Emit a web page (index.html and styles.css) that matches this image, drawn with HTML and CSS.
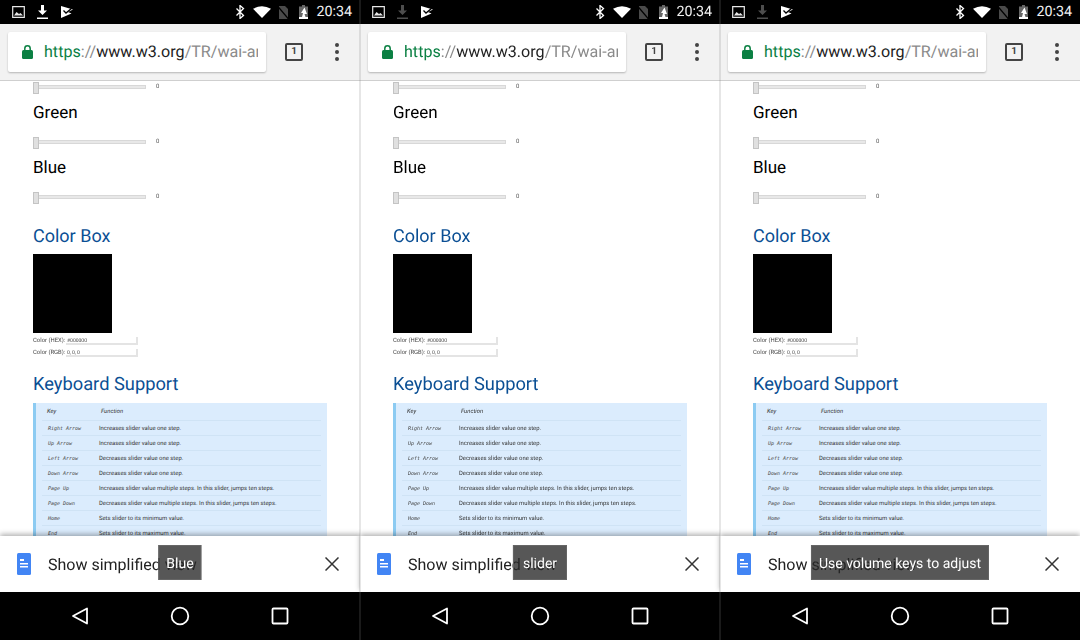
FILE: index.html
```html
<!DOCTYPE html>
<html lang="en">
<head>
    <meta charset="UTF-8">
    <title>Slider screenshots</title>
    <link rel="stylesheet" href="styles.css">
</head>
<body>
    <div class="telefonos">
        <template id="plantilla">
            <section class="telefono">
                <div class="estado">
                    <svg class="ico-foto" width="13" height="12" viewBox="0 0 13 12"><path d="M.7.7h11.600v10.600H.7z" fill="none" stroke="#e8e8e8" stroke-width="1.200"/><path d="M2 9.500l2.500-3.500 2.500 2 1.500-1 2.500 2.500z" fill="#e8e8e8"/></svg>
                    <svg class="ico-bajar" width="11" height="14" viewBox="0 0 11 14"><path d="M4 0h3v5.500h3L5.500 10 1 5.500h3zM0 12.500h11V14H0z" fill="#fff"/></svg>
                    <svg class="ico-play" width="12" height="12" viewBox="0 0 12 12"><path d="M0 0l12 3.500-5 2.500 3.500 1.500L0 12z" fill="#fff"/><path d="M2.500 4.500l2.500 2.500L11 2" fill="none" stroke="#000" stroke-width="1.300"/></svg>
                    <span class="hueco"></span>
                    <svg width="10" height="14" viewBox="0 0 10 14"><path d="M1.500 3.500l7 7L5 13.500V.5l3.500 3-7 7" fill="none" stroke="#fff" stroke-width="1.300"/></svg>
                    <svg class="ico-wifi" width="18" height="12" viewBox="0 0 18 12"><path d="M0 2.800Q9-2.300 18 2.800L9 12z" fill="#fff"/></svg>
                    <svg class="ico-sim" width="12" height="13" viewBox="0 0 12 13"><path d="M2 0h6l3 3v10H2z" fill="#4a4a4a"/><path d="M.5 0l11 13" stroke="#000" stroke-width="1.300"/></svg>
                    <svg class="ico-bat" width="9" height="14" viewBox="0 0 9 14"><path d="M3 0h3v1.500h3V12H0V1.500h3z" fill="#666"/><path d="M0 12h9v2H0z" fill="#fff"/><path d="M5.500 2.500L2 8h2l-1 4h3.500l-1-3H8z" fill="#fff"/></svg>
                    <span class="hora">20:34</span>
                </div>
                <div class="barra">
                    <div class="url">
                        <svg class="candado" width="11" height="14" viewBox="0 0 11 14"><path d="M2.800 5V3.500a2.700 2.700 0 0 1 5.400 0V5" fill="none" stroke="#0b8043" stroke-width="1.500"/><rect y="5" width="11" height="9" rx="1.500" fill="#0b8043"/></svg>
                        <span class="url-texto"><b class="verde">https</b><i class="gris">://</i>www.w3.org<i class="gris">/TR/wai-ar</i></span>
                    </div>
                    <div class="pestanas">1</div>
                    <div class="menu"><span></span><span></span><span></span></div>
                </div>
                <main class="pagina">
                    <div class="deslizador primero"><span class="pista"></span><span class="valor">0</span></div>
                    <h4>Green</h4>
                    <div class="deslizador"><span class="pista"></span><span class="valor">0</span></div>
                    <h4>Blue</h4>
                    <div class="deslizador"><span class="pista"></span><span class="valor">0</span></div>
                    <h3 class="titulo-caja">Color Box</h3>
                    <div class="caja"></div>
                    <div class="campo"><label>Color (HEX):</label><span class="entrada">#000000</span></div>
                    <div class="campo"><label>Color (RGB):</label><span class="entrada">0, 0, 0</span></div>
                    <h3 class="titulo-teclado">Keyboard Support</h3>
                    <table class="teclas">
                        <tr><th>Key</th><th>Function</th></tr>
                        <tr><td><kbd>Right Arrow</kbd></td><td>Increases slider value one step.</td></tr>
                        <tr><td><kbd>Up Arrow</kbd></td><td>Increases slider value one step.</td></tr>
                        <tr><td><kbd>Left Arrow</kbd></td><td>Decreases slider value one step.</td></tr>
                        <tr><td><kbd>Down Arrow</kbd></td><td>Decreases slider value one step.</td></tr>
                        <tr><td><kbd>Page Up</kbd></td><td>Increases slider value multiple steps. In this slider, jumps ten steps.</td></tr>
                        <tr><td><kbd>Page Down</kbd></td><td>Decreases slider value multiple steps. In this slider, jumps ten steps.</td></tr>
                        <tr><td><kbd>Home</kbd></td><td>Sets slider to its minimum value.</td></tr>
                        <tr><td><kbd>End</kbd></td><td>Sets slider to its maximum value.</td></tr>
                    </table>
                </main>
                <div class="aviso">
                    <svg width="14" height="22" viewBox="0 0 14 22"><rect width="14" height="22" rx="1.500" fill="#4285f4"/><path d="M3 6h4v2H3zM3 10h8v1.500H3zM3 13h8v1.500H3z" fill="#fff"/></svg>
                    <span class="aviso-texto">Show simplified view</span>
                    <svg class="cerrar" width="14" height="14" viewBox="0 0 14 14"><path d="M.5.5l13 13M13.500.5l-13 13" stroke="#333" stroke-width="1.500"/></svg>
                    <div class="globo"></div>
                </div>
                <nav class="navegacion">
                    <svg width="18" height="18" viewBox="0 0 18 18"><path d="M16 1.500v15L2 9z" fill="none" stroke="#fff" stroke-width="1.800" stroke-linejoin="round"/></svg>
                    <svg width="20" height="20" viewBox="0 0 20 20"><circle cx="10" cy="10" r="8.300" fill="none" stroke="#fff" stroke-width="1.800"/></svg>
                    <svg width="18" height="18" viewBox="0 0 18 18"><rect x="1.500" y="1.500" width="15" height="15" rx="1" fill="none" stroke="#fff" stroke-width="1.800"/></svg>
                </nav>
            </section>
        </template>
    </div>

    <script>
        const globos = ["Blue", "slider", "Use volume keys to adjust"];
        const contenedor = document.querySelector(".telefonos");
        const plantilla = document.getElementById("plantilla");

        globos.forEach(function (texto, i) {
            const copia = plantilla.content.cloneNode(true);
            copia.querySelector(".globo").innerText = texto;
            if (i > 0) copia.querySelector(".ico-bajar").classList.add("apagado");
            contenedor.appendChild(copia);
        });
    </script>
</body>
</html>
```

FILE: styles.css
```css
* {
    box-sizing: border-box;
}
body {
    margin: 0;
    font-family: Roboto, "Liberation Sans", sans-serif;
    background: #fff;
    text-rendering: geometricPrecision;
}
.telefonos {
    display: flex;
    width: 1080px;
    height: 640px;
    overflow: hidden;
    filter: blur(0.35px);
}
.telefono {
    position: relative;
    width: 360px;
    height: 640px;
    flex: none;
    display: flex;
    flex-direction: column;
}
/* linea entre capturas */
.telefono + .telefono::before {
    content: "";
    position: absolute;
    z-index: 2;
    left: -1px;
    top: 0;
    width: 2px;
    height: 100%;
    background: rgba(128,128,128,0.2);
}

/* barra de estado */
.estado {
    height: 24px;
    background: #000;
    display: flex;
    align-items: center;
    padding: 0 8px 0 12px;
    flex: none;
}
.ico-bajar {
    margin-left: 12px;
}
.ico-bajar.apagado {
    opacity: 0.3;
}
.ico-play {
    margin-left: 13px;
}
.hueco {
    flex: 1;
}
.ico-wifi {
    margin-left: 8px;
}
.ico-sim {
    margin-left: 6px;
}
.ico-bat {
    margin-left: 10px;
}
.hora {
    color: #f0f0f0;
    font-size: 14.300px;
    margin-left: 8px;
}

/* barra del navegador */
.barra {
    height: 57px;
    background: #f2f2f2;
    border-bottom: 1px solid #cfcfcf;
    display: flex;
    align-items: center;
    padding: 0 0 1px 8px;
    flex: none;
}
.url {
    width: 258px;
    height: 40px;
    background: #fff;
    border-radius: 2px;
    box-shadow: 0 1px 2px rgba(0,0,0,0.25);
    display: flex;
    align-items: center;
    padding: 0 8px 0 14px;
    overflow: hidden;
}
.candado {
    flex: none;
}
.url-texto {
    margin-left: 11px;
    font-size: 16.100px;
    white-space: nowrap;
    color: #222;
    overflow: hidden;
}
.verde {
    color: #0b8043;
    font-weight: normal;
}
.gris {
    color: #8a8a8a;
    font-style: normal;
}
.pestanas {
    width: 18px;
    height: 18px;
    margin-left: 19px;
    border: 2px solid #444;
    border-radius: 2px;
    font-size: 10px;
    font-weight: 700;
    color: #444;
    display: flex;
    align-items: center;
    justify-content: center;
}
.menu {
    display: flex;
    flex-direction: column;
    gap: 3px;
    margin-left: 32px;
}
.menu span {
    width: 4px;
    height: 4px;
    border-radius: 50%;
    background: #444;
}

/* contenido */
.pagina {
    flex: 1;
    min-height: 0;
    overflow: hidden;
    background: #fff;
    padding: 0 0 0 33px;
}
.deslizador {
    display: flex;
    align-items: center;
    height: 11px;
    margin-top: 13px;
    font-size: 6px;
    color: #555;
    filter: grayscale(1);
}
.deslizador.primero {
    margin-top: 0;
}
.pista {
    position: relative;
    width: 113px;
    height: 4px;
    background: #e8e8e8;
    border: 1px solid #d8d8d8;
}
.pista::before {
    content: "";
    position: absolute;
    left: -1px;
    top: -4px;
    width: 4px;
    height: 10px;
    background: #e0e0e0;
    border: 1px solid #c4c4c4;
}
.valor {
    margin-left: 10px;
}
h4 {
    margin: 11px 0 0;
    height: 20px;
    font-size: 17px;
    line-height: 20px;
    font-weight: 400;
    color: #000;
}
h3 {
    margin: 0;
    font-size: 18.300px;
    line-height: 22px;
    font-weight: 400;
    color: #0b4f94;
}
.titulo-caja {
    margin-top: 24px;
    font-size: 18px;
}
.caja {
    width: 79px;
    height: 79px;
    margin-top: 6px;
    background: #000;
}
.campo {
    display: flex;
    align-items: center;
    height: 8px;
    margin-top: 4px;
    font-size: 5.900px;
    color: #444;
    filter: grayscale(1);
}
.campo label {
    width: 33px;
}
.entrada {
    width: 72px;
    height: 8px;
    line-height: 8px;
    padding-left: 1px;
    font-size: 5px;
    border-right: 2px solid #e4e4e4;
    border-bottom: 2px solid #e4e4e4;
}
.titulo-teclado {
    margin-top: 17px;
}
.teclas {
    width: 294px;
    margin-top: 7px;
    border-collapse: separate;
    border-spacing: 0;
    border-left: 3px solid #8ccbf2;
    background: #dbecfd;
    font-size: 5.900px;
    color: #333;
    padding: 0 6px;
}
.teclas th {
    font-weight: 400;
    font-style: italic;
    text-align: left;
    height: 18px;
    border-bottom: 1px solid #cfe3f5;
    padding: 1px 0 0 5px;
}
.teclas th + th {
    padding-left: 2px;
}
.teclas td {
    height: 15px;
    padding: 1px 0 0;
    border-bottom: 1px solid #cfe3f5;
}
.teclas td:first-child {
    width: 57px;
    padding-left: 6px;
}
kbd {
    font-family: "DejaVu Sans Mono", monospace;
    font-size: 5px;
    font-style: italic;
    color: #444;
}

/* aviso inferior */
.aviso {
    position: relative;
    height: 56px;
    flex: none;
    background: #fff;
    box-shadow: 0 -2px 5px rgba(0,0,0,0.3);
    display: flex;
    align-items: center;
    padding: 0 21px 0 17px;
}
.aviso-texto {
    flex: 1;
    margin-left: 17px;
    font-size: 16px;
    color: #222;
}
.globo {
    position: absolute;
    top: 9px;
    left: 50%;
    transform: translateX(-50%);
    height: 35px;
    padding: 0 7px;
    line-height: 36px;
    background: rgba(40,40,40,0.78);
    color: #fff;
    font-size: 14px;
    white-space: nowrap;
    border: 1px solid #666;
}
.telefono:nth-of-type(2) .globo {
    padding: 0 9px;
}

/* navegacion */
.navegacion {
    height: 48px;
    flex: none;
    background: #000;
    display: flex;
    align-items: center;
    justify-content: space-between;
    padding: 0 71px;
}
```
